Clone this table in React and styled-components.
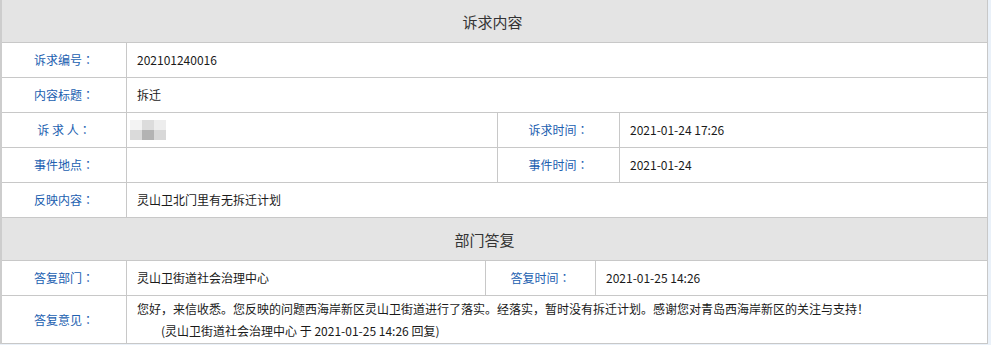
import React from "react";
import styled, { createGlobalStyle } from "styled-components";

const Global = createGlobalStyle`
  html, body { margin: 0; padding: 0; background: #eaf1f9; }
  body { font-family: "Noto Sans CJK SC", "Microsoft YaHei", sans-serif; }
`;

const Page = styled.div`
  width: 988px;
  background: #fff;
  border-left: 2px solid #cdcdcd;
  box-sizing: border-box;
`;

const Table = styled.table`
  width: 100%;
  border-collapse: separate;
  border-spacing: 0;
  table-layout: fixed;
  font-size: 12px;
`;

const HeadCell = styled.th`
  height: 42px;
  padding: 0 ${(p) => p.$shift || 0}px 0 0;
  background: #e4e4e4;
  border-right: 1px solid #c8c8c8;
  border-bottom: 1px solid #c8c8c8;
  font-size: 15px;
  font-weight: normal;
  color: #333;
  text-align: center;
  vertical-align: middle;
`;

const Label = styled.td`
  height: 34px;
  padding: 0;
  line-height: 18px;
  color: #2160b0;
  text-align: center;
  vertical-align: middle;
  border-right: 1px solid #c8c8c8;
  border-bottom: 1px solid #c8c8c8;
  white-space: pre;
`;

const Colon = styled.span`
  font-family: "Noto Sans CJK TC", "Noto Sans CJK SC", sans-serif;
`;

const Value = styled.td`
  height: ${(p) => (p.$tall ? "44px" : "34px")};
  padding: ${(p) => (p.$tall ? "2px 10px 1px" : "0 10px")};
  line-height: ${(p) => (p.$tall ? "22px" : "18px")};
  color: #1a1a1a;
  text-align: left;
  vertical-align: middle;
  border-right: 1px solid #c8c8c8;
  border-bottom: 1px solid #c8c8c8;
`;

const Indent = styled.div`
  padding-left: 24px;
`;

const Blur = styled.div`
  display: grid;
  grid-template-columns: repeat(3, 12px);
  grid-template-rows: repeat(2, 10px);
  width: 36px;
  margin: -1px 0 -1px -7px;
  filter: blur(0.4px);
`;

const Px = styled.span`
  background: ${(p) => p.$c};
`;

const Masked = () => (
  <Blur>
    {["#f3f3f3", "#dcdcdc", "#ededed", "#dadada", "#b3b3b3", "#d8d8d8"].map((c, i) => (
      <Px key={i} $c={c} />
    ))}
  </Blur>
);

const L = ({ children }) => (
  <Label>
    {children}
    <Colon>：</Colon>
  </Label>
);

export default function App() {
  return (
    <>
      <Global />
      <Page>
        <Table>
          <colgroup>
            <col style={{ width: 125 }} />
            <col style={{ width: 371 }} />
            <col style={{ width: 122 }} />
            <col />
          </colgroup>
          <tbody>
            <tr>
              <HeadCell colSpan={4} $shift={4}>诉求内容</HeadCell>
            </tr>
            <tr>
              <L>诉求编号</L>
              <Value colSpan={3}>202101240016</Value>
            </tr>
            <tr>
              <L>内容标题</L>
              <Value colSpan={3}>拆迁</Value>
            </tr>
            <tr>
              <L>诉 求 人</L>
              <Value>
                <Masked />
              </Value>
              <L>诉求时间</L>
              <Value>2021-01-24 17:26</Value>
            </tr>
            <tr>
              <L>事件地点</L>
              <Value></Value>
              <L>事件时间</L>
              <Value>2021-01-24</Value>
            </tr>
            <tr>
              <L>反映内容</L>
              <Value colSpan={3}>灵山卫北门里有无拆迁计划</Value>
            </tr>
          </tbody>
        </Table>
        <Table>
          <colgroup>
            <col style={{ width: 125 }} />
            <col style={{ width: 359 }} />
            <col style={{ width: 110 }} />
            <col />
          </colgroup>
          <tbody>
            <tr>
              <HeadCell colSpan={4} $shift={20}>部门答复</HeadCell>
            </tr>
            <tr>
              <L>答复部门</L>
              <Value>灵山卫街道社会治理中心</Value>
              <L>答复时间</L>
              <Value>2021-01-25 14:26</Value>
            </tr>
            <tr>
              <L>答复意见</L>
              <Value colSpan={3} $tall>
                <div>您好，来信收悉。您反映的问题西海岸新区灵山卫街道进行了落实。经落实，暂时没有拆迁计划。感谢您对青岛西海岸新区的关注与支持！</div>
                <Indent>(灵山卫街道社会治理中心 于 2021-01-25 14:26 回复)</Indent>
              </Value>
            </tr>
          </tbody>
        </Table>
      </Page>
    </>
  );
}
